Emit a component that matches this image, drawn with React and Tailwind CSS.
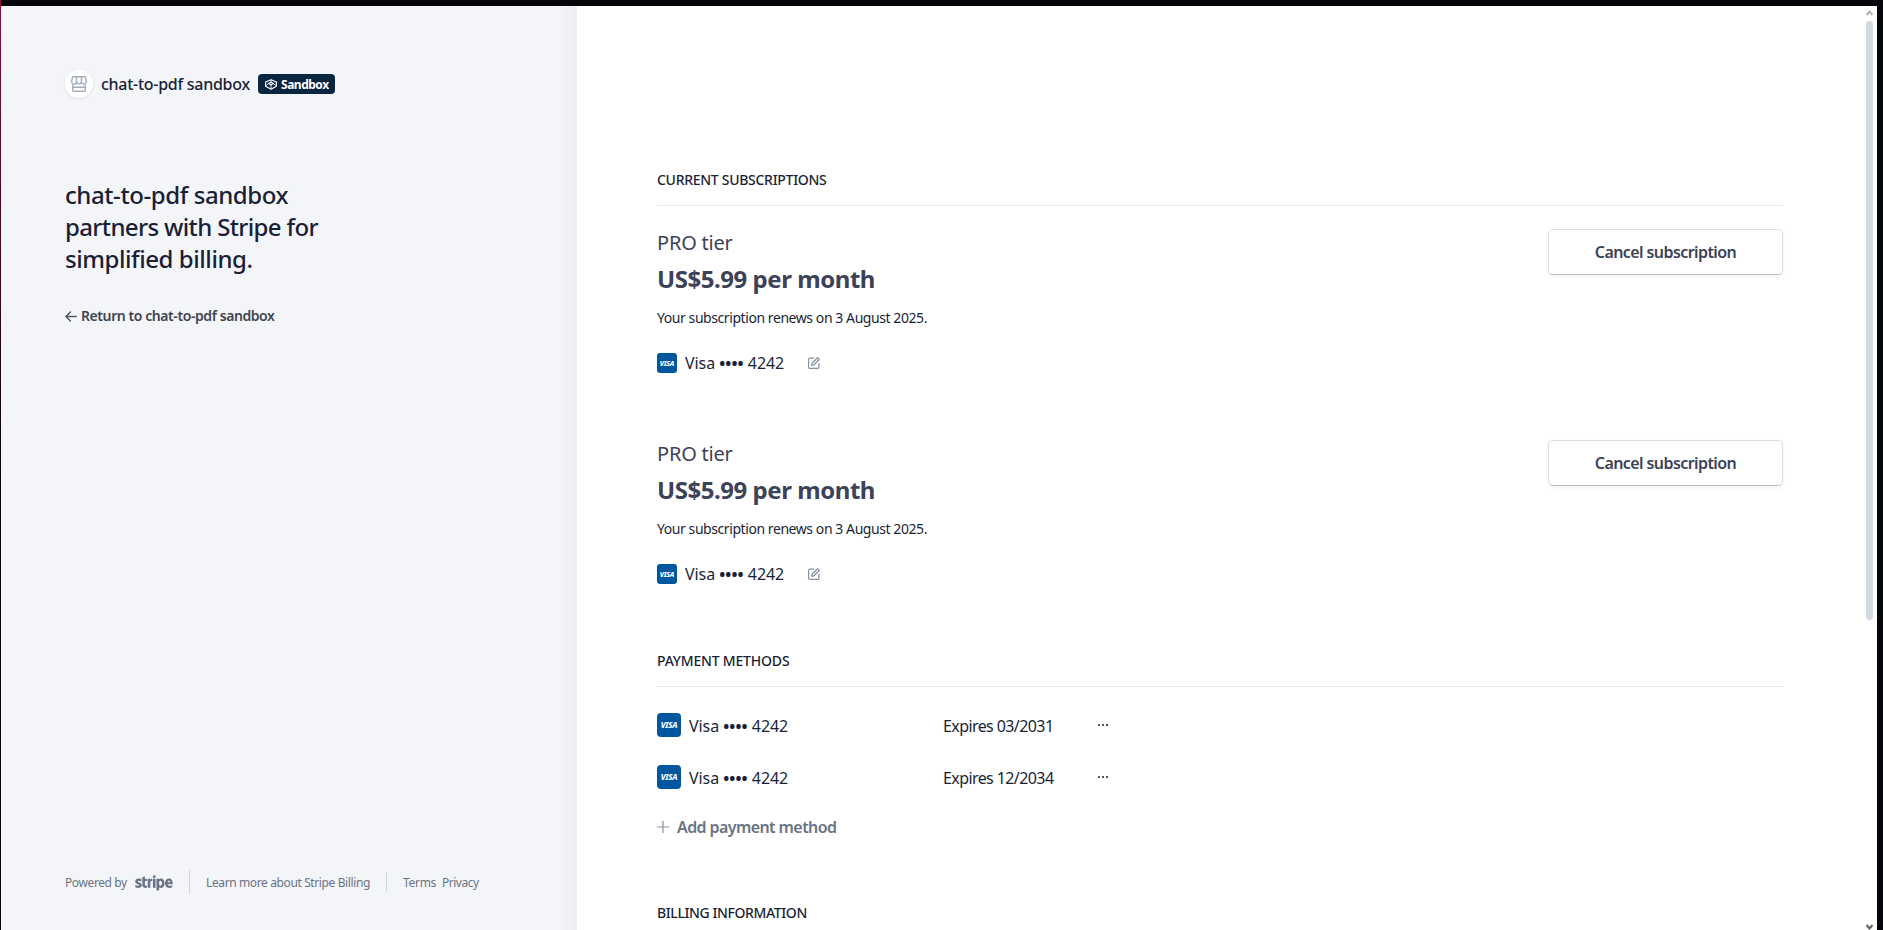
import { FaStripe } from "react-icons/fa6";

function StoreIcon() {
  return (
    <svg className="size-4" viewBox="0 0 16 16" fill="none" stroke="#a3acba" strokeWidth="1.4">
      <path d="M2.6.7h10.8c.5 0 .9.3 1.100.8.5 1.300.8 2.700.8 4.100a2.350 2.350 0 0 1-4.850.3 2.500 2.500 0 0 1-4.900 0A2.350 2.350 0 0 1 .7 5.600c0-1.400.3-2.800.8-4.100.200-.5.600-.8 1.100-.8z" strokeLinejoin="round" />
      <path d="M5.550.9v5M10.450.9v5" />
      <path d="M1.700 8.600v5.600c0 .6.500 1.100 1.100 1.100h10.400c.6 0 1.100-.5 1.100-1.100V8.600M1.700 11.300h12.600" />
    </svg>
  );
}

function SandboxIcon() {
  return (
    <svg className="h-[11px] w-3" viewBox="0 0 12 11" fill="none" stroke="#fff" strokeWidth="1.1" strokeLinejoin="round">
      <path d="M6 .7 11.400 3v4.300L6 10.200.6 7.300V3z" />
      <path d="M6 3.200 8.500 4.500 6 5.800 3.500 4.500z" />
      <path d="M.6 6.900l2.900-2.400M11.400 6.900 8.500 4.500M6 .7v2.500M6 5.800v4.200" strokeWidth=".9" />
    </svg>
  );
}

function EditIcon() {
  return (
    <svg className="size-3" viewBox="0 0 11 11" fill="none" stroke="#8792a2" strokeWidth="1.1" strokeLinejoin="round">
      <path d="M5.500 1H1.700a1.200 1.200 0 0 0-1.200 1.200v7.100a1.200 1.200 0 0 0 1.200 1.200h7.100A1.200 1.200 0 0 0 10 9.300V5.500" />
      <path d="M3.300 7.700 3.900 5.500 8.700.7l1.600 1.600-4.800 4.800z" />
    </svg>
  );
}

function VisaIcon({ large }) {
  return (
    <span
      className={
        large
          ? "flex size-6 shrink-0 items-center justify-center rounded-[4px] bg-[#00579f]"
          : "flex size-5 shrink-0 items-center justify-center rounded-[3px] bg-[#00579f]"
      }
    >
      <span
        className={
          large
            ? "text-[8px] leading-none font-extrabold tracking-[-0.2px] text-white italic"
            : "text-[7px] leading-none font-extrabold tracking-[-0.25px] text-white italic"
        }
      >
        VISA
      </span>
    </span>
  );
}

function CardNumber() {
  return (
    <span className="tracking-[-0.06px]">
      Visa <span className="font-bold tracking-[0.1px]">••••</span> 4242
    </span>
  );
}

function SectionTitle({ children }) {
  return (
    <h2 className="h-9 shrink-0 border-b border-[#e3e8ee] text-sm leading-5 font-medium text-[#1a1f36]">
      {children}
    </h2>
  );
}

function Subscription() {
  return (
    <div className="flex h-[210px] shrink-0 items-start justify-between">
      <div className="flex flex-col">
        <div className="mt-px text-xl leading-[26px] tracking-[-0.2px] text-[#3c4257]">PRO tier</div>
        <div className="mt-[7px] text-2xl leading-8 font-bold tracking-[-0.455px] text-[#3c4257]">
          US$5.99 per month
        </div>
        <div className="mt-[13px] text-sm leading-5 tracking-[-0.43px] text-[#1a1f36]">
          Your subscription renews on 3 August 2025.
        </div>
        <div className="mt-[23px] flex h-6 items-center text-[#1a1f36]">
          <VisaIcon />
          <span className="ml-2 w-[123px] text-base leading-6 whitespace-nowrap">
            <CardNumber />
          </span>
          <EditIcon />
        </div>
      </div>
      <button className="h-[46px] w-[235px] rounded-[5px] border border-[#dcdee3] border-b-[#b9bbc1] bg-white text-base font-semibold tracking-[-0.578px] text-[#3c4257] shadow-[0_2px_4px_rgba(60,66,87,0.06)]">
        Cancel subscription
      </button>
    </div>
  );
}

function PaymentMethod({ expires }) {
  return (
    <div className="flex h-[52px] shrink-0 items-start text-base leading-6 whitespace-nowrap text-[#1a1f36]">
      <VisaIcon large />
      <span className="ml-2 w-[254px] pt-px">
        <CardNumber />
      </span>
      <span className="w-[155px] pt-px tracking-[-0.59px]">Expires {expires}</span>
      <span className="flex h-6 items-center gap-[2px]">
        <i className="size-[2px] bg-[#4f566b]" />
        <i className="size-[2px] bg-[#4f566b]" />
        <i className="size-[2px] bg-[#4f566b]" />
      </span>
    </div>
  );
}

function Sidebar() {
  return (
    <aside className="flex w-[576px] shrink-0 flex-col bg-[linear-gradient(to_right,#f4f5f9_calc(100%-18px),#ecedf2)] pl-16">
      <div className="mt-16 flex h-7 items-center">
        <span className="flex size-7 items-center justify-center rounded-full bg-white shadow-[0_1px_3px_rgba(60,66,87,0.12)]">
          <StoreIcon />
        </span>
        <span className="ml-2 w-[157px] text-base font-medium tracking-[-0.27px] whitespace-nowrap text-[#1a1f36]">
          chat-to-pdf sandbox
        </span>
        <span className="flex h-5 w-[77px] items-center rounded bg-[#0a2540] pl-[7px] text-xs font-bold tracking-[-0.48px] text-white">
          <SandboxIcon />
          <span className="ml-1 pt-px">Sandbox</span>
        </span>
      </div>
      <h1 className="mt-[81px] text-2xl leading-8 font-medium text-[#1a1f36]">
        <span className="block tracking-[-0.41px]">chat-to-pdf sandbox</span>
        <span className="block tracking-[-0.644px]">partners with Stripe for</span>
        <span className="block tracking-[-0.44px]">simplified billing.</span>
      </h1>
      <a className="mt-[31px] flex h-5 items-center text-sm leading-5 font-semibold tracking-[-0.42px] text-[#414552]">
        <svg className="mr-1 h-[11px] w-3" viewBox="0 0 12 11" fill="none" stroke="#4f566b" strokeWidth="1.5" strokeLinecap="round" strokeLinejoin="round">
          <path d="M5.400 1 1 5.500l4.400 4.500M1 5.500h10.300" />
        </svg>
        Return to chat-to-pdf sandbox
      </a>
      <footer className="mt-auto mb-9 flex h-6 items-center text-xs whitespace-nowrap text-[#6a7383]">
        <span className="w-[70px] pt-px tracking-[-0.4px]">Powered by</span>
        <FaStripe className="mt-px h-[30px] w-[38px] text-[#697386]" />
        <span className="ml-4 h-6 w-px bg-[#d0d4db]" />
        <span className="ml-4 w-[164px] pt-px tracking-[-0.381px]">Learn more about Stripe Billing</span>
        <span className="ml-4 h-5 w-px bg-[#d0d4db]" />
        <span className="ml-4 w-[39px] pt-px tracking-[-0.3px]">Terms</span>
        <span className="pt-px tracking-[-0.5px]">Privacy</span>
      </footer>
    </aside>
  );
}

export default function App() {
  return (
    <div className="flex h-[930px] w-[1883px] overflow-hidden bg-[#05060b] font-['Noto_Sans','Open_Sans',sans-serif]">
      <div className="w-px shrink-0 bg-[linear-gradient(to_bottom,#8a1030,#3a0718_270px,#05060b_480px)]" />
      <div className="mt-1.5 flex h-[924px] w-[1876px]">
        <Sidebar />
        <main className="flex min-w-0 flex-1 justify-between bg-white">
          <div className="ml-20 flex w-[1126px] flex-col pt-[164px]">
            <SectionTitle>
              <span className="tracking-[-0.29px]">CURRENT SUBSCRIPTIONS</span>
            </SectionTitle>
            <div className="mt-[23px] flex h-[422px] shrink-0 flex-col gap-px">
              <Subscription />
              <Subscription />
            </div>
            <SectionTitle>
              <span className="tracking-[-0.19px]">PAYMENT METHODS</span>
            </SectionTitle>
            <div className="mt-[26px] flex shrink-0 flex-col">
              <PaymentMethod expires="03/2031" />
              <PaymentMethod expires="12/2034" />
            </div>
            <a className="-mt-[2px] flex h-6 shrink-0 items-center text-base font-semibold tracking-[-0.59px] text-[#6a7383]">
              <svg className="mr-2 size-3" viewBox="0 0 12 12" stroke="#8792a2" strokeWidth="1.2">
                <path d="M0 6h12M6 0v12" />
              </svg>
              Add payment method
            </a>
            <div className="mt-16 shrink-0">
              <SectionTitle>
                <span className="tracking-[-0.4px]">BILLING INFORMATION</span>
              </SectionTitle>
            </div>
          </div>
          <div className="mr-1 flex w-[7px] flex-col items-center pt-1">
            <svg className="h-[6px] w-[7px] shrink-0" viewBox="0 0 7 6" fill="none" stroke="#b4b4b4" strokeWidth="2">
              <path d="M.5 5 3.500 1.500 6.500 5" />
            </svg>
            <span className="mt-[5px] h-[599px] w-[7px] shrink-0 rounded-full bg-[#d0dbe4]" />
            <svg className="mt-auto h-[6px] w-[7px] shrink-0" viewBox="0 0 7 6" fill="none" stroke="#606060" strokeWidth="2">
              <path d="M.5 1 3.500 4.500 6.500 1" />
            </svg>
          </div>
        </main>
      </div>
    </div>
  );
}
